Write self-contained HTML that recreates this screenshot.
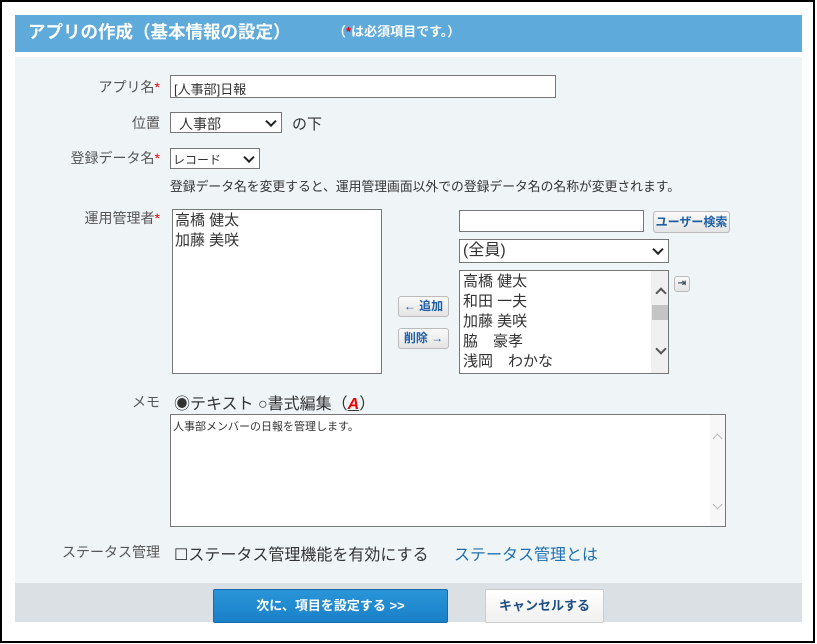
<!DOCTYPE html>
<html><head><meta charset="utf-8"><style>
*{margin:0;padding:0;box-sizing:border-box}
body{width:817px;height:644px;background:#fff;font-family:"Liberation Sans","Noto Sans CJK JP",sans-serif;position:relative;overflow:hidden;color:#333}
.a{position:absolute}
.lbl{position:absolute;font-size:14px;color:#555;text-align:right;width:160px;left:0}
.req{color:#e00}
.box{position:absolute;background:#fff;border:1px solid #777}
.btn{position:absolute;border:1px solid #bbb;border-radius:3px;background:linear-gradient(#fafafa,#e4e4e4);color:#1f5fa6;font-weight:bold;font-size:12px;text-align:center}
.sel{position:absolute;background:#fff;border:1px solid #777;font-size:14px;color:#333}
.chev{position:absolute;right:6px;top:50%;width:8px;height:8px;border-right:2px solid #222;border-bottom:2px solid #222;transform:translateY(-70%) rotate(45deg)}
</style></head><body>
<div class="a" style="left:0;top:0;width:815px;height:643px;border:2px solid #000"></div>
<div class="a" style="left:15px;top:15px;width:787px;height:37px;background:#5eaadb"></div>
<div class="a" style="left:28px;top:19px;color:#fff;font-weight:bold;font-size:17.5px;line-height:26px">アプリの作成（基本情報の設定）</div>
<div class="a" style="left:333px;top:21px;color:#fff;font-weight:bold;font-size:13px">（<span style="color:#e00">*</span>は必須項目です。）</div>
<div class="a" style="left:15px;top:57px;width:787px;height:526px;background:#eff4f7"></div>
<div class="a" style="left:15px;top:583px;width:787px;height:39px;background:#dbe0e4"></div>

<div class="lbl" style="top:77px">アプリ名<span class="req">*</span></div>
<div class="box" style="left:170px;top:75px;width:386px;height:23px;font-size:13px;padding:3px 3px">[人事部]日報</div>

<div class="lbl" style="top:113px">位置</div>
<div class="sel" style="left:170px;top:112px;width:112px;height:21px;padding:1px 8px">人事部<div class="chev"></div></div>
<div class="a" style="left:292px;top:113px;font-size:15px">の下</div>

<div class="lbl" style="top:148px">登録データ名<span class="req">*</span></div>
<div class="sel" style="left:170px;top:148px;width:90px;height:21px;padding:2px 2px;font-size:12px">レコード<div class="chev"></div></div>
<div class="a" style="left:170px;top:176px;font-size:12.8px">登録データ名を変更すると、運用管理画面以外での登録データ名の名称が変更されます。</div>

<div class="lbl" style="top:208px">運用管理者<span class="req">*</span></div>
<div class="box" style="left:172px;top:209px;width:210px;height:165px;font-size:15px;line-height:20px;padding:1px 2px">高橋 健太<br>加藤 美咲</div>

<div class="btn" style="left:398px;top:296px;width:51px;height:21px;line-height:19px">← 追加</div>
<div class="btn" style="left:398px;top:328px;width:51px;height:21px;line-height:19px">削除 →</div>

<div class="box" style="left:459px;top:210px;width:185px;height:22px"></div>
<div class="btn" style="left:653px;top:211px;width:77px;height:22px;line-height:20px">ユーザー検索</div>
<div class="sel" style="left:459px;top:239px;width:210px;height:24px;padding:0 3px;font-size:16px;line-height:22px">(全員)<div class="chev"></div></div>
<div class="box" style="left:459px;top:270px;width:210px;height:104px;overflow:hidden;font-size:15px;line-height:20px;padding:1px 3px">高橋 健太<br>和田 一夫<br>加藤 美咲<br>脇　豪孝<br>浅岡　わかな
<div class="a" style="right:0;top:0;width:17px;height:102px;background:#f0f0f0"></div>
<div class="a" style="right:3px;top:18px;width:8px;height:8px;border-left:2px solid #555;border-top:2px solid #555;transform:rotate(45deg)"></div>
<div class="a" style="right:0;top:34px;width:16px;height:15px;background:#c4c4c4"></div>
<div class="a" style="right:3px;top:74px;width:8px;height:8px;border-right:2px solid #555;border-bottom:2px solid #555;transform:rotate(45deg)"></div>
</div>
<div class="btn" style="left:674px;top:276px;width:16px;height:16px;font-size:10px;line-height:13px;color:#456">⇥</div>

<div class="lbl" style="top:392px">メモ</div>
<div class="a" style="left:174px;top:390px;font-size:16px">◉テキスト ○書式編集（<b style="color:#e00;font-style:italic;text-decoration:underline;text-decoration-color:#333">A</b>）</div>
<div class="box" style="left:170px;top:414px;width:556px;height:113px;font-size:11px;padding:3px 2px">人事部メンバーの日報を管理します。
<div class="a" style="right:0;top:0;width:15px;height:111px;background:#f7f7f7"></div>
<div class="a" style="right:4px;top:20px;width:7px;height:7px;border-left:1px solid #bbb;border-top:1px solid #bbb;transform:rotate(45deg)"></div>
<div class="a" style="right:4px;top:86px;width:7px;height:7px;border-right:1px solid #bbb;border-bottom:1px solid #bbb;transform:rotate(45deg)"></div>
</div>

<div class="lbl" style="top:542px">ステータス管理</div>
<div class="a" style="left:174px;top:541px;font-size:16px">☐ステータス管理機能を有効にする</div>
<div class="a" style="left:454px;top:541px;font-size:16px;color:#1f6fb0">ステータス管理とは</div>

<div class="a" style="left:213px;top:589px;width:235px;height:34px;background:linear-gradient(#2a95d8,#1a80c8);border:1px solid #1a6aa8;border-radius:2px;color:#fff;font-weight:bold;font-size:13px;text-align:center;line-height:32px">次に、項目を設定する &gt;&gt;</div>
<div class="a" style="left:485px;top:589px;width:119px;height:34px;background:linear-gradient(#fff,#f0f0f0);border:1px solid #ccc;border-radius:2px;color:#1f4f86;font-weight:bold;font-size:13px;text-align:center;line-height:32px">キャンセルする</div>
</body></html>
